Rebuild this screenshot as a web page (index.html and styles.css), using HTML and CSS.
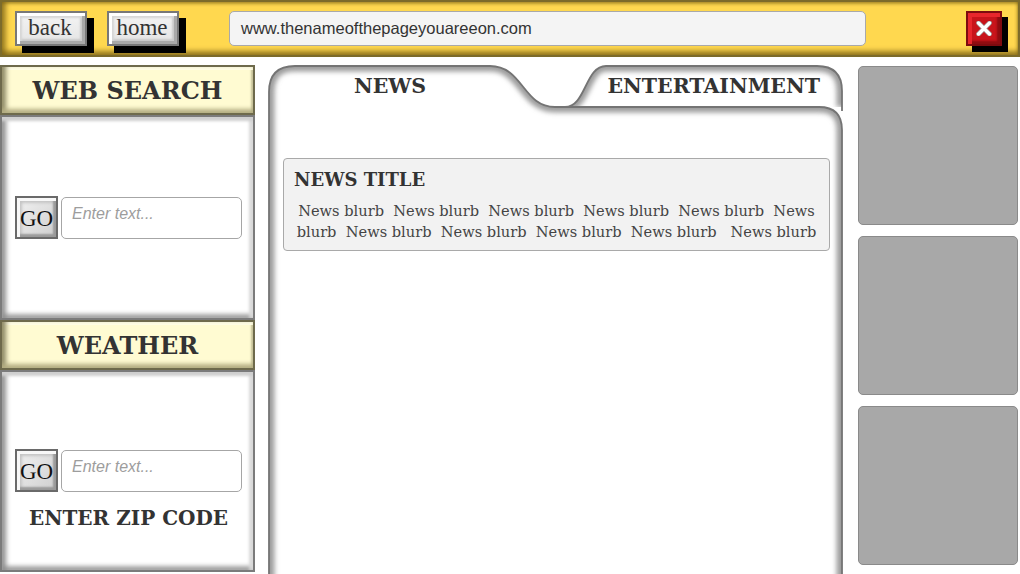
FILE: index.html
```html
<!DOCTYPE html>
<html>
<head>
<meta charset="utf-8">
<link rel="stylesheet" href="styles.css">
</head>
<body>
<header class="topbar">
  <button class="navbtn">back</button>
  <button class="navbtn">home</button>
  <div class="url">www.thenameofthepageyouareeon.com</div>
  <button class="close" aria-label="close">
    <svg width="16" height="15" viewBox="0 0 16 15">
      <path d="M2.5 2 L13.5 13 M13.5 2 L2.5 13" stroke="#9a9a9a" stroke-width="4.6" stroke-linecap="round"/>
      <path d="M2.5 2 L13.5 13 M13.5 2 L2.5 13" stroke="#fff" stroke-width="3.2" stroke-linecap="round"/>
    </svg>
  </button>
</header>
<main class="main">
  <aside class="left">
    <div class="hdr">WEB SEARCH</div>
    <div class="box search">
      <div class="row">
        <button class="go">GO</button>
        <div class="input">Enter text...</div>
      </div>
    </div>
    <div class="hdr">WEATHER</div>
    <div class="box weather">
      <div class="row">
        <button class="go">GO</button>
        <div class="input">Enter text...</div>
      </div>
      <div class="zip">ENTER ZIP CODE</div>
    </div>
  </aside>
  <section class="center">
    <svg class="frame" width="575" height="515" viewBox="0 0 575 515">
      <defs>
        <filter id="blur" x="-5%" y="-5%" width="110%" height="110%"><feGaussianBlur stdDeviation="2.8"/></filter>
        <clipPath id="cmain"><path d="M1 530 V27 Q1 1 27 1 H222 C255 1 255 42 287 42 H551 Q574 42 574 65 V530 Z"/></clipPath>
        <clipPath id="cent"><path d="M297 42 C318 42 317 1 338 1 H549 Q574 1 574 26 V42 Z"/></clipPath>
      </defs>
      <path d="M287 42 H297 C318 42 317 1 338 1 H549 Q574 1 574 26 V42 Z" fill="#fff"/>
      <path d="M297 42 C318 42 317 1 338 1 H549 Q574 1 574 26 V42" fill="none" stroke="#9c9c9c" stroke-width="11" filter="url(#blur)" clip-path="url(#cent)"/>
      <path d="M297 42 C318 42 317 1 338 1 H549 Q574 1 574 26 V46" fill="none" stroke="#747474" stroke-width="1.8"/>
      <path d="M1 530 V27 Q1 1 27 1 H222 C255 1 255 42 287 42 H551 Q574 42 574 65 V530 Z" fill="#fff"/>
      <path d="M1 530 V27 Q1 1 27 1 H222 C255 1 255 42 287 42 H551 Q574 42 574 65 V530" fill="none" stroke="#9c9c9c" stroke-width="11" filter="url(#blur)" clip-path="url(#cmain)"/>
      <path d="M1 530 V27 Q1 1 27 1 H222 C255 1 255 42 287 42 H551 Q574 42 574 65 V530" fill="none" stroke="#747474" stroke-width="1.8"/>
    </svg>
    <nav class="tabs">
      <div class="tab news">NEWS</div>
      <div class="tab ent">ENTERTAINMENT</div>
    </nav>
    <div class="content">
      <article class="card">
        <h2 class="title">NEWS TITLE</h2>
        <p class="blurb">News blurb&nbsp; News blurb&nbsp; News blurb&nbsp; News blurb&nbsp; News blurb&nbsp; News blurb&nbsp; News blurb&nbsp; News blurb&nbsp; News blurb&nbsp; News blurb&nbsp;&nbsp; News blurb</p>
      </article>
    </div>
  </section>
  <aside class="right">
    <div class="ad"></div>
    <div class="ad"></div>
    <div class="ad"></div>
  </aside>
</main>
</body>
</html>
```
FILE: styles.css
```css
* { box-sizing: border-box; }
html, body { margin: 0; padding: 0; }
body {
  width: 1020px;
  height: 574px;
  overflow: hidden;
  background: #fff;
  font-family: "Liberation Serif", serif;
}

/* top bar */
.topbar {
  height: 57px;
  display: flex;
  align-items: center;
  padding: 0 16px 0 13px;
  background: #ffd84f;
  border: 2px solid #7c6b2b;
  box-shadow:
    inset 0 -6px 5px -2px rgba(120, 95, 20, 0.75),
    inset 6px 0 5px -2px rgba(120, 95, 20, 0.7),
    inset 0 4px 3px -2px rgba(120, 95, 20, 0.5),
    inset -3px 0 3px -2px rgba(120, 95, 20, 0.5);
}
.navbtn {
  width: 72px;
  height: 35px;
  padding: 0 2px 2px 0;
  margin: 0 20px 0 0;
  font-family: "Liberation Serif", serif;
  font-size: 23px;
  color: #333;
  background: linear-gradient(#f4f4f4, #e4e4e4);
  border: 2px solid #787878;
  box-shadow:
    7px 7px 0 #000,
    inset 3px 3px 0 #fff,
    inset -3px -3px 0 #a9a9a9,
    inset 5px 5px 2px #d6d6d6,
    inset -5px -5px 2px #c9c9c9;
  line-height: 28px;
}
.navbtn + .navbtn { margin-right: 50px; }
.url {
  width: 637px;
  height: 35px;
  border: 1px solid #a9a9a9;
  border-radius: 5px;
  background: #f4f4f4;
  font-family: "Liberation Sans", sans-serif;
  font-size: 16.5px;
  color: #333;
  padding: 7px 0 0 11px;
}
.close {
  margin-left: auto;
  width: 36px;
  height: 35px;
  padding: 0;
  display: flex;
  align-items: center;
  justify-content: center;
  background: #c8141b;
  border: 2px solid #7e0b0f;
  box-shadow:
    6px 6px 0 #000,
    inset 4px 4px 0 #e8262c,
    inset -3px -3px 2px #8e0c10;
}

/* main */
.main {
  display: flex;
  padding-top: 8px;
}
.left {
  width: 255px;
  margin-right: 13px;
  display: flex;
  flex-direction: column;
}
.hdr {
  height: 50px;
  display: flex;
  align-items: center;
  justify-content: center;
  background: #fffbd2;
  border: 2px solid #6e6a4c;
  box-shadow:
    inset 0 -6px 4px -2px #b4ae83,
    inset 7px 0 5px -3px #8c8764,
    inset 0 4px 0 -1px #fffde4,
    inset -4px 0 2px -2px #c9c49c;
  font-family: "DejaVu Serif", serif;
  font-weight: bold;
  font-size: 24px;
  color: #333;
  padding-top: 0;
}
.box {
  background: #fff;
  border: 2px solid #7b7b7b;
  box-shadow:
    inset 0 5px 3px -1px #cfcfcf,
    inset 6px 0 5px -2px #8e8e8e,
    inset -5px 0 3px -1px #d9d9d9,
    inset 0 -6px 4px -2px #a3a3a3;
  padding: 0 11px 0 13px;
}
.search {
  height: 205px;
  display: flex;
  align-items: center;
}
.weather {
  height: 202px;
  padding-top: 77px;
}
.row {
  display: flex;
  align-items: center;
  gap: 3px;
  width: 100%;
}
.go {
  width: 43px;
  height: 43px;
  padding: 3px 0 0;
  margin: 0;
  font-family: "Liberation Serif", serif;
  font-size: 23px;
  color: #111;
  background: linear-gradient(135deg, #f2f2f2, #cfcfcf);
  border: 2px solid #6a6a6a;
  box-shadow:
    inset 3px 3px 0 #f8f8f8,
    inset -3px -3px 2px #9a9a9a,
    inset 5px 5px 3px #c4c4c4;
  line-height: 30px;
}
.input {
  flex: 1;
  height: 42px;
  border: 1px solid #a6a6a6;
  border-radius: 5px;
  background: #fff;
  font-family: "Liberation Sans", sans-serif;
  font-style: italic;
  font-size: 16px;
  color: #9d9d9d;
  padding: 7px 0 0 10px;
}
.zip {
  margin-top: 14px;
  text-align: center;
  font-family: "DejaVu Serif", serif;
  font-weight: bold;
  font-size: 20px;
  color: #333;
}

/* center panel */
.center {
  position: relative;
  width: 575px;
  height: 515px;
  margin-right: 15px;
}
.frame {
  position: absolute;
  left: 0;
  top: 0;
  z-index: 0;
}
.tabs {
  position: relative;
  z-index: 1;
  height: 42px;
  display: flex;
  align-items: center;
  justify-content: space-between;
  font-family: "DejaVu Serif", serif;
  font-weight: bold;
  font-size: 20.5px;
  color: #333;
}
.tab.news {
  width: 244px;
  text-align: center;
}
.tab.ent {
  padding-right: 23px;
}
.content {
  position: relative;
  z-index: 1;
  padding: 51px 13px 0 15px;
}
.card {
  height: 93px;
  background: #f2f2f2;
  border: 1px solid #a9a9a9;
  border-radius: 4px;
  padding: 9px 10px 0 10px;
}
.title {
  margin: 0;
  font-family: "DejaVu Serif", serif;
  font-weight: bold;
  font-size: 18px;
  color: #333;
  line-height: 24px;
}
.blurb {
  margin: 8px 0 0;
  text-align: center;
  font-family: "DejaVu Serif", serif;
  font-size: 14.6px;
  line-height: 21px;
  color: #444;
}

/* right column */
.right {
  width: 160px;
  padding-top: 1px;
  display: flex;
  flex-direction: column;
  gap: 11px;
}
.ad {
  height: 159px;
  background: #a8a8a8;
  border: 1.5px solid #8a8a8a;
  border-radius: 5px;
}
```
